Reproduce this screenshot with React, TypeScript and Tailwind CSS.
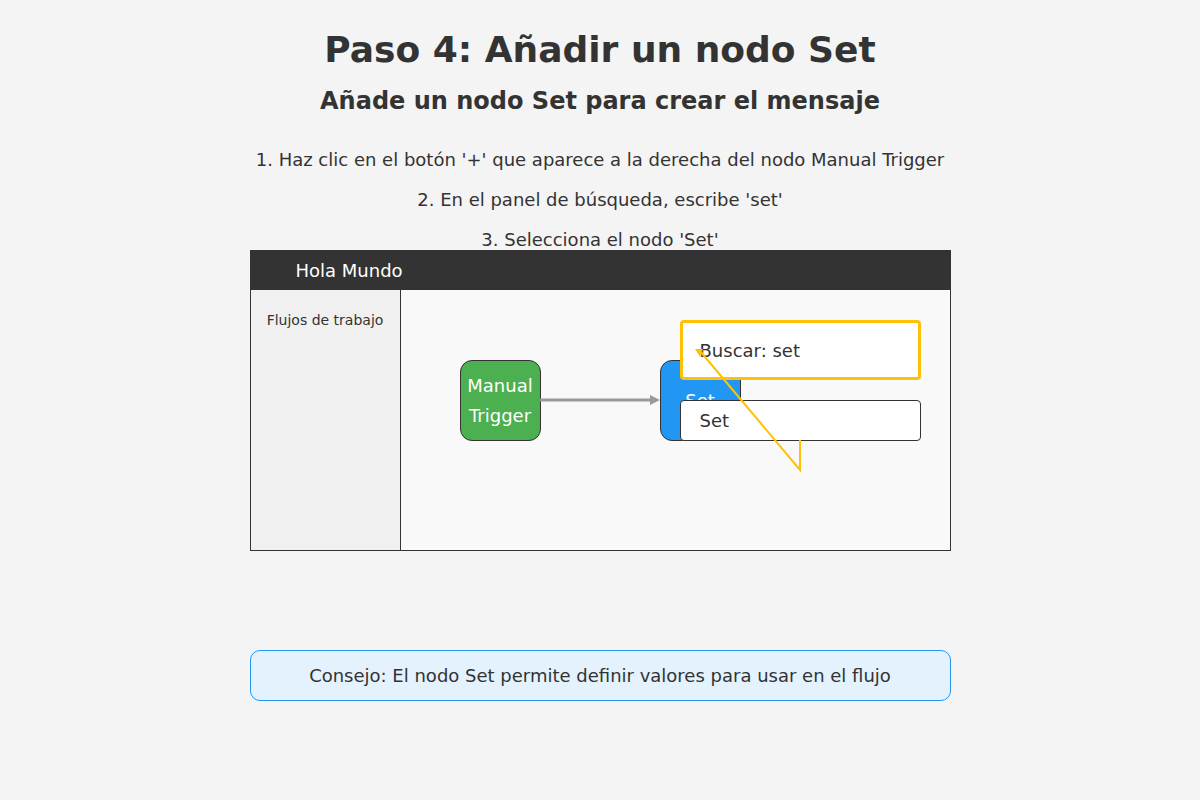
export default function App() {
  const steps = [
    "1. Haz clic en el botón '+' que aparece a la derecha del nodo Manual Trigger",
    "2. En el panel de búsqueda, escribe 'set'",
    "3. Selecciona el nodo 'Set'",
  ];

  return (
    <main
      className="w-[1200px] h-[800px] bg-[#f4f4f4] flex flex-col items-center text-[#333]"
      style={{ fontFamily: "'DejaVu Sans', Verdana, sans-serif" }}
    >
      {/* Headings */}
      <h1 className="mt-[32px] h-[36px] text-[36px] leading-[36px] font-bold">Paso 4: Añadir un nodo Set</h1>
      <h2 className="mt-[21px] h-[24px] text-[24px] leading-[24px] font-bold">Añade un nodo Set para crear el mensaje</h2>

      {/* Steps */}
      <div className="mt-[37px] flex flex-col items-center gap-[20px]">
        {steps.map((s) => (
          <p key={s} className="h-[20px] text-[18px] leading-[20px]">
            {s}
          </p>
        ))}
      </div>

      {/* Mock n8n window */}
      <div className="w-[701px] h-[301px] flex flex-col">
        <div className="h-[40px] bg-[#333] flex items-center pl-[46px] text-white text-[18px]">Hola Mundo</div>
        <div className="flex-1 flex border border-t-0 border-[#333]">
          <div className="w-[150px] bg-[#f0f0f0] border-r border-[#333] flex justify-center pt-[22px]">
            <span className="text-[14px] leading-[16px] text-[#333]">Flujos de trabajo</span>
          </div>
          <div className="relative flex-1 bg-[#f9f9f9]">
            {/* Manual Trigger node */}
            <div className="absolute left-[59px] top-[70px] w-[81px] h-[81px] rounded-[12px] bg-[#4caf50] border border-[#333] flex flex-col items-center justify-center text-white text-[18px] leading-[30px]">
              <span>Manual</span>
              <span>Trigger</span>
            </div>

            {/* Set node */}
            <div className="absolute left-[259px] top-[70px] w-[81px] h-[81px] rounded-[12px] bg-[#2196f3] border border-[#333] flex items-center justify-center text-white text-[18px] leading-[30px]">
              Set
            </div>

            {/* Search box */}
            <div className="absolute left-[279px] top-[30px] w-[241px] h-[60px] bg-white border-[3px] border-[#ffc107] rounded-[4px] flex items-center pl-[17px] text-[18px]">
              Buscar: set
            </div>

            {/* Result */}
            <div className="absolute left-[279px] top-[110px] w-[241px] h-[41px] bg-white border border-[#333] rounded-[4px] flex items-center pl-[19px] text-[18px]">
              Set
            </div>

            {/* Connectors */}
            <svg className="absolute left-0 top-0 pointer-events-none" width="549" height="260" viewBox="0 0 549 260">
              <line x1="139" y1="110" x2="250" y2="110" stroke="#999" strokeWidth="3" />
              <polygon points="249,105 259,110 249,115" fill="#999" />
              <polyline points="399,150 399,180 299,61" fill="none" stroke="#ffc107" strokeWidth="2" />
              <polygon points="294,59 302,59 299,67" fill="#ffc107" />
            </svg>
          </div>
        </div>
      </div>

      {/* Tip */}
      <div className="mt-[99px] w-[701px] h-[51px] rounded-[10px] border border-[#2196f3] bg-[#e3f2fd] flex items-center justify-center text-[18px]">
        Consejo: El nodo Set permite definir valores para usar en el flujo
      </div>
    </main>
  );
}
